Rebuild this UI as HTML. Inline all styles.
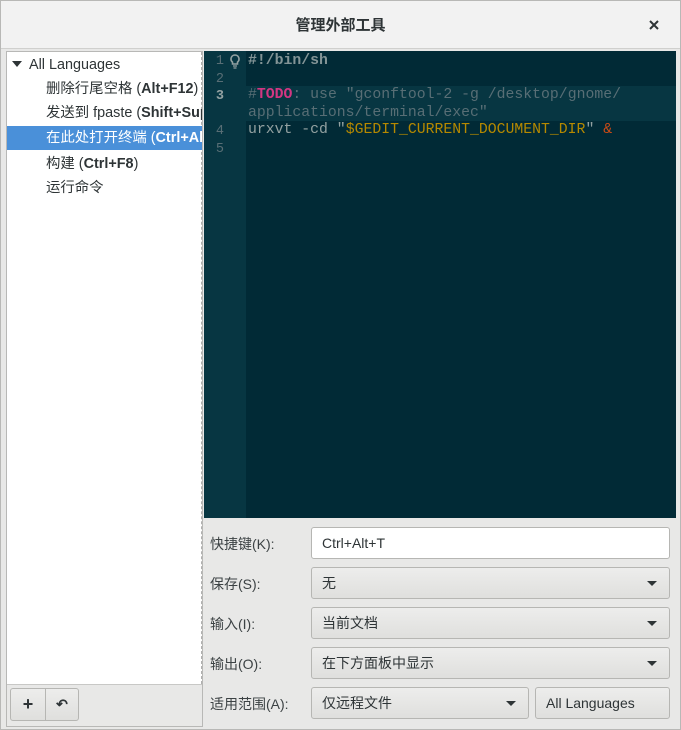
<!DOCTYPE html>
<html><head><meta charset="utf-8"><style>
*{box-sizing:border-box;margin:0;padding:0}
body{width:681px;height:730px;background:#e8e8e7;font-family:"Liberation Sans","Noto Sans CJK SC",sans-serif;font-size:14px;color:#2e3436;position:relative;overflow:hidden}
.win{position:absolute;left:0;top:0;width:681px;height:730px;border:1px solid #b8b8b6;background:#e8e8e7}
.title{position:absolute;left:0;top:0;width:679px;height:48px;background:#f2f2f2;border-bottom:1px solid #d0d0ce;text-align:center;line-height:50px;font-weight:bold;font-size:15px}
.close{position:absolute;right:21px;top:19px}
.left{position:absolute;left:5px;top:50px;width:197px;height:676px;background:#fff;border:1px solid #b8b8b6;overflow:hidden}
.left .dash{position:absolute;right:0;top:0;bottom:42px;border-right:1px dashed #b0b0b0}
.row{position:absolute;left:0;width:196px;height:24px;line-height:24px;white-space:nowrap;overflow:hidden;font-size:14.4px}
.sel{background:#4a90d9;color:#fff}
.tb{position:absolute;left:0;bottom:0;width:196px;height:42px;background:#e8e8e7;border-top:1px solid #c8c8c6}
.btn{position:absolute;top:3px;height:33px;border:1px solid #b6b6b3;background:linear-gradient(#ededec,#dfdfdd);text-align:center;line-height:31px;font-weight:bold}
.ed{position:absolute;left:203px;top:50px;width:472px;height:467px;background:#012a36;font-family:"Liberation Mono",monospace;font-size:14.8px;line-height:17.5px}
.gut{position:absolute;left:0;top:0;width:42px;height:467px;background:#073642}
.ln{position:absolute;left:0;width:20px;text-align:right;color:#586e75;font-size:13.5px}
.cl{position:absolute;left:42px;width:430px;top:35px;height:35px;background:#073642}
.code{position:absolute;left:44px;color:#93a1a1;white-space:pre}
.form{position:absolute;left:203px;top:518px;width:472px;height:208px}
.lbl{position:absolute;left:6px;font-size:14px;color:#3c4244}
.cb{position:absolute;height:32px;border:1px solid #b6b6b3;border-radius:3px;background:linear-gradient(#ededec,#dfdfdd);line-height:30px;padding-left:10px;font-size:14px}
.cb .ar{position:absolute;right:12px;top:13px;width:0;height:0;border-left:5px solid transparent;border-right:5px solid transparent;border-top:5px solid #2e3436}
</style></head><body><div class="win">
<div class="title">管理外部工具<svg class="close" width="10" height="10" viewBox="0 0 10 10"><path d="M1 1L9 9M9 1L1 9" stroke="#2e3436" stroke-width="2"/></svg></div>
<div class="left"><div class="dash"></div>
<div class="row" style="top:1px;padding-left:5px"><span style="display:inline-block;width:0;height:0;border-left:5px solid transparent;border-right:5px solid transparent;border-top:6px solid #2e3436;margin-right:7px;vertical-align:2px"></span>All Languages</div>
<div class="row" style="top:25px;padding-left:39px">删除行尾空格 (<b>Alt+F12</b>)</div>
<div class="row" style="top:49px;padding-left:39px">发送到 fpaste (<b>Shift+Super+P</b>)</div>
<div class="row sel" style="top:74px;padding-left:39px">在此处打开终端 (<b>Ctrl+Alt+T</b>)</div>
<div class="row" style="top:100px;padding-left:39px">构建 (<b>Ctrl+F8</b>)</div>
<div class="row" style="top:124px;padding-left:39px">运行命令</div>
<div class="tb"><div class="btn" style="left:3px;width:36px;border-radius:3px 0 0 3px;font-size:18px">+</div><div class="btn" style="left:38px;width:34px;border-radius:0 3px 3px 0;font-size:14px">↶</div></div>
</div>
<div class="ed"><div class="gut"></div><div class="cl"></div>
<div class="ln" style="top:2px">1</div><div class="ln" style="top:19.5px">2</div><div class="ln" style="top:37px;font-weight:bold;color:#93a1a1">3</div><div class="ln" style="top:72px">4</div><div class="ln" style="top:89.5px">5</div>
<svg style="position:absolute;left:26px;top:3px" width="10" height="15" viewBox="0 0 10 15"><path d="M5 1a4 4 0 0 0-2.5 7.1V10h5V8.1A4 4 0 0 0 5 1z" fill="none" stroke="#93a1a1" stroke-width="1.6"/><path d="M3 12h4M3.5 14h3" stroke="#93a1a1" stroke-width="1.3"/></svg>
<div class="code" style="top:2px;font-weight:bold;color:#839496">#!/bin/sh</div>
<div class="code" style="top:36px;color:#586e75">#<b style="color:#d33682">TODO</b>: use "gconftool-2 -g /desktop/gnome/
applications/terminal/exec"</div>
<div class="code" style="top:71px">urxvt -cd "<span style="color:#b58900">$GEDIT_CURRENT_DOCUMENT_DIR</span>" <span style="color:#cb4b16">&amp;</span></div>
</div>
<div class="form">
<div class="lbl" style="top:15px">快捷键(K):</div>
<div class="cb" style="left:107px;top:8px;width:359px;background:#fff">Ctrl+Alt+T</div>
<div class="lbl" style="top:55px">保存(S):</div>
<div class="cb" style="left:107px;top:48px;width:359px">无<span class="ar"></span></div>
<div class="lbl" style="top:95px">输入(I):</div>
<div class="cb" style="left:107px;top:88px;width:359px">当前文档<span class="ar"></span></div>
<div class="lbl" style="top:135px">输出(O):</div>
<div class="cb" style="left:107px;top:128px;width:359px">在下方面板中显示<span class="ar"></span></div>
<div class="lbl" style="top:175px">适用范围(A):</div>
<div class="cb" style="left:107px;top:168px;width:218px">仅远程文件<span class="ar"></span></div>
<div class="cb" style="left:331px;top:168px;width:135px">All Languages</div>
</div>
</div></body></html>
